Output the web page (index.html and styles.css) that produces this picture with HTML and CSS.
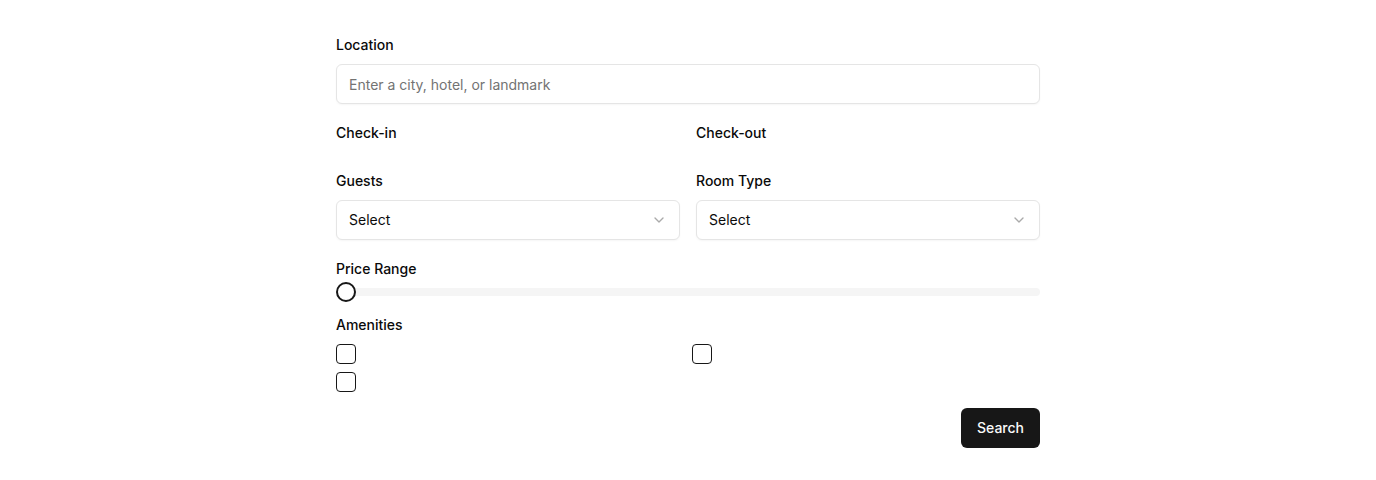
FILE: index.html
```html
<!DOCTYPE html>
<html lang="en">
<head>
<meta charset="utf-8">
<title>Hotel Search</title>
<link rel="stylesheet" href="styles.css">
</head>
<body>
<form class="form">
  <div class="field">
    <label class="label" for="loc">Location</label>
    <input id="loc" class="input" type="text" placeholder="Enter a city, hotel, or landmark">
  </div>
  <div class="row">
    <div class="field">
      <label class="label">Check-in</label>
      <div class="empty"></div>
    </div>
    <div class="field">
      <label class="label">Check-out</label>
      <div class="empty"></div>
    </div>
  </div>
  <div class="row">
    <div class="field">
      <label class="label">Guests</label>
      <button type="button" class="select"><span>Select</span>
        <svg class="chev" width="16" height="16" viewBox="0 0 24 24" fill="none" stroke="currentColor" stroke-width="2" stroke-linecap="round" stroke-linejoin="round"><path d="m6 9 6 6 6-6"/></svg>
      </button>
    </div>
    <div class="field">
      <label class="label">Room Type</label>
      <button type="button" class="select"><span>Select</span>
        <svg class="chev" width="16" height="16" viewBox="0 0 24 24" fill="none" stroke="currentColor" stroke-width="2" stroke-linecap="round" stroke-linejoin="round"><path d="m6 9 6 6 6-6"/></svg>
      </button>
    </div>
  </div>
  <div class="field">
    <label class="label">Price Range</label>
    <div class="slider">
      <div class="track"></div>
      <span class="thumb"></span>
    </div>
  </div>
  <div class="field">
    <label class="label">Amenities</label>
    <div class="amenities">
      <span class="checkbox"></span>
      <span class="checkbox"></span>
      <span class="checkbox"></span>
    </div>
  </div>
  <div class="actions">
    <button type="button" class="btn">Search</button>
  </div>
</form>
</body>
</html>
```

FILE: styles.css
```css
* { box-sizing: border-box; }
body {
  margin: 0;
  background: #ffffff;
  font-family: Inter, "Noto Sans", sans-serif;
  color: #0a0a0a;
  font-size: 14px;
}
.form {
  width: 704px;
  margin: 0 auto;
  padding-top: 32px;
  display: flex;
  flex-direction: column;
  gap: 16px;
}
.field {
  display: flex;
  flex-direction: column;
  gap: 8px;
}
.label {
  font-size: 14px;
  font-weight: 500;
  line-height: 22px;
  padding-top: 2px;
  color: #0a0a0a;
}
.empty { height: 0; }
.row {
  display: grid;
  grid-template-columns: 1fr 1fr;
  gap: 16px;
}
.input {
  height: 40px;
  width: 100%;
  border: 1px solid #e5e5e5;
  border-radius: 6px;
  padding: 0 12px;
  font-family: inherit;
  font-size: 14px;
  color: #0a0a0a;
  background: #fff;
  box-shadow: 0 1px 2px rgba(0,0,0,0.04);
  outline: none;
}
.input::placeholder { color: #737373; }
.select {
  height: 40px;
  width: 100%;
  border: 1px solid #e5e5e5;
  border-radius: 6px;
  padding: 0 12px 2px;
  font-family: inherit;
  font-size: 14px;
  color: #0a0a0a;
  background: #fff;
  box-shadow: 0 1px 2px rgba(0,0,0,0.04);
  display: flex;
  align-items: center;
  justify-content: space-between;
  text-align: left;
}
.chev { color: #737373; opacity: 0.6; margin-top: 2px; }
.slider {
  position: relative;
  height: 8px;
}
.track {
  height: 8px;
  border-radius: 9999px;
  background: #f5f5f5;
}
.thumb {
  position: absolute;
  left: 0;
  top: -6px;
  width: 20px;
  height: 20px;
  border-radius: 50%;
  border: 2px solid #171717;
  background: #fff;
}
.amenities {
  display: grid;
  grid-template-columns: 1fr 1fr;
  gap: 8px;
}
.checkbox {
  display: block;
  width: 20px;
  height: 20px;
  border: 1px solid #171717;
  border-radius: 4px;
  background: #fff;
}
.actions {
  display: flex;
  justify-content: flex-end;
}
.btn {
  height: 40px;
  padding: 0 16px 2px;
  border: none;
  border-radius: 6px;
  background: #171717;
  color: #fafafa;
  font-family: inherit;
  font-size: 14px;
  font-weight: 500;
}
```
